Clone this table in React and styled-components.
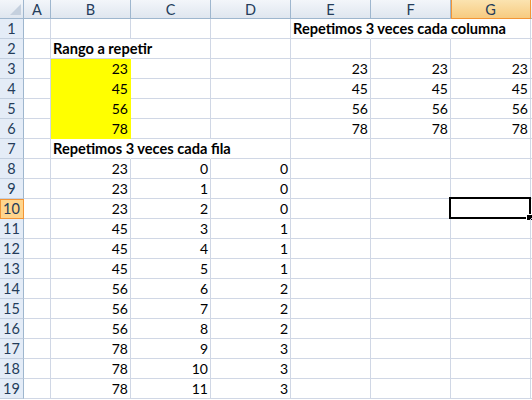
import React from 'react';
import styled, { createGlobalStyle, css } from 'styled-components';

const Global = createGlobalStyle`
  html, body { margin: 0; padding: 0; background: #ffffff; overflow: hidden; }
  body { font-family: Lato, "Liberation Sans", sans-serif; }
`;

const GRID = '#d0d7e5';
const HEAD_LINE = '#9eb6ce';
const ORANGE_LINE = '#f29536';

const Sheet = styled.div`
  display: grid;
  grid-template-columns: 24px 27px repeat(6, 80px) 1fr;
  grid-template-rows: 19px repeat(19, 20px);
  width: 532px;
  font-family: Lato, "Liberation Sans", sans-serif;
`;

const Corner = styled.div`
  box-sizing: border-box;
  background: linear-gradient(to bottom, #f3f6fa, #dfe6ef);
  border-right: 1px solid ${HEAD_LINE};
  border-bottom: 1px solid ${HEAD_LINE};
  display: flex;
  align-items: flex-end;
  justify-content: flex-end;
  padding: 0 2px 3px 0;
`;

const ColHead = styled.div`
  box-sizing: border-box;
  display: flex;
  align-items: center;
  justify-content: center;
  font-size: 14.5px;
  color: #243c5a;
  background: linear-gradient(to bottom, #f3f6fa, #dfe6ef);
  border-right: 1px solid ${HEAD_LINE};
  border-bottom: 1px solid ${HEAD_LINE};
  ${(p) =>
    p.$active &&
    css`
      background: linear-gradient(to bottom, #fbe3b0, #f7cb80);
      border-right-color: ${ORANGE_LINE};
      border-bottom-color: ${ORANGE_LINE};
      box-shadow: inset 1px 0 0 ${ORANGE_LINE};
    `}
`;

const RowHead = styled.div`
  box-sizing: border-box;
  display: flex;
  align-items: center;
  justify-content: center;
  font-size: 14.5px;
  color: #243c5a;
  background: #e4ecf7;
  border-right: 1px solid ${HEAD_LINE};
  border-bottom: 1px solid #c3cfdf;
  ${(p) =>
    p.$active &&
    css`
      background: #ffd58d;
      border-right-color: ${ORANGE_LINE};
      border-bottom-color: ${ORANGE_LINE};
      box-shadow: inset 0 1px 0 ${ORANGE_LINE}, inset 1px 0 0 ${ORANGE_LINE};
    `}
`;

const Cell = styled.div`
  box-sizing: border-box;
  position: relative;
  display: flex;
  align-items: flex-end;
  justify-content: ${(p) => (p.$num ? 'flex-end' : 'flex-start')};
  padding: 0 2px 0 2px;
  font-size: ${(p) => (p.$bold ? '14.6px' : '14px')};
  line-height: 18px;
  color: #000000;
  white-space: nowrap;
  font-weight: ${(p) => (p.$bold ? 700 : 400)};
  border-right: 1px solid ${(p) => (p.$fill ? p.$fill : p.$hideRight ? '#ffffff' : GRID)};
  border-bottom: 1px solid ${(p) => (p.$fill ? p.$fill : GRID)};
  background: ${(p) => p.$fill || 'transparent'};
  z-index: ${(p) => (p.$bold ? 2 : 1)};
`;

const CellText = styled.span`
  position: relative;
  z-index: 3;
`;

const Selection = styled.div`
  position: absolute;
  left: -2px;
  top: -2px;
  right: -1px;
  bottom: -1px;
  border: 2px solid #000000;
  z-index: 5;
  pointer-events: none;
`;

const FillHandle = styled.div`
  position: absolute;
  right: -4px;
  bottom: -4px;
  width: 5px;
  height: 5px;
  background: #000000;
  border: 1px solid #ffffff;
  z-index: 6;
`;

const COLS = ['A', 'B', 'C', 'D', 'E', 'F', 'G', 'H'];

const cellsData = {};
const set = (ref, value, opts = {}) => {
  cellsData[ref] = { value, ...opts };
};

set('E1', 'Repetimos 3 veces cada columna', { bold: true });
set('B2', 'Rango a repetir', { bold: true });
[23, 45, 56, 78].forEach((v, i) => {
  const r = i + 3;
  set('B' + r, v, { num: true, fill: '#ffff00' });
  set('E' + r, v, { num: true });
  set('F' + r, v, { num: true });
  set('G' + r, v, { num: true });
});
set('B7', 'Repetimos 3 veces cada fila', { bold: true });
const bVals = [23, 23, 23, 45, 45, 45, 56, 56, 56, 78, 78, 78];
bVals.forEach((v, i) => {
  const r = i + 8;
  set('B' + r, v, { num: true });
  set('C' + r, i, { num: true });
  set('D' + r, Math.floor(i / 3), { num: true });
});

// cells whose right gridline is covered by overflowing text
const hidden = new Set(['E1', 'F1', 'B2', 'B7', 'C7']);

const ACTIVE_COL = 'G';
const ACTIVE_ROW = 10;

export default function App() {
  const rows = [];
  for (let r = 1; r <= 19; r++) rows.push(r);

  return (
    <>
      <Global />
      <Sheet>
        <Corner>
          <svg width="11" height="11" viewBox="0 0 11 11">
            <polygon points="11,0 11,11 0,11" fill="#c5d0de" />
          </svg>
        </Corner>
        {COLS.map((c) => (
          <ColHead key={c} $active={c === ACTIVE_COL}>
            {c === 'H' ? '' : c}
          </ColHead>
        ))}
        {rows.map((r) => (
          <React.Fragment key={r}>
            <RowHead $active={r === ACTIVE_ROW}>{r}</RowHead>
            {COLS.map((c) => {
              const ref = c + r;
              const d = cellsData[ref];
              const isSel = c === ACTIVE_COL && r === ACTIVE_ROW;
              return (
                <Cell
                  key={ref}
                  $num={d && d.num}
                  $bold={d && d.bold}
                  $fill={d && d.fill}
                  $hideRight={hidden.has(ref)}
                >
                  {d && <CellText>{d.value}</CellText>}
                  {isSel && (
                    <Selection>
                      <FillHandle />
                    </Selection>
                  )}
                </Cell>
              );
            })}
          </React.Fragment>
        ))}
      </Sheet>
    </>
  );
}
